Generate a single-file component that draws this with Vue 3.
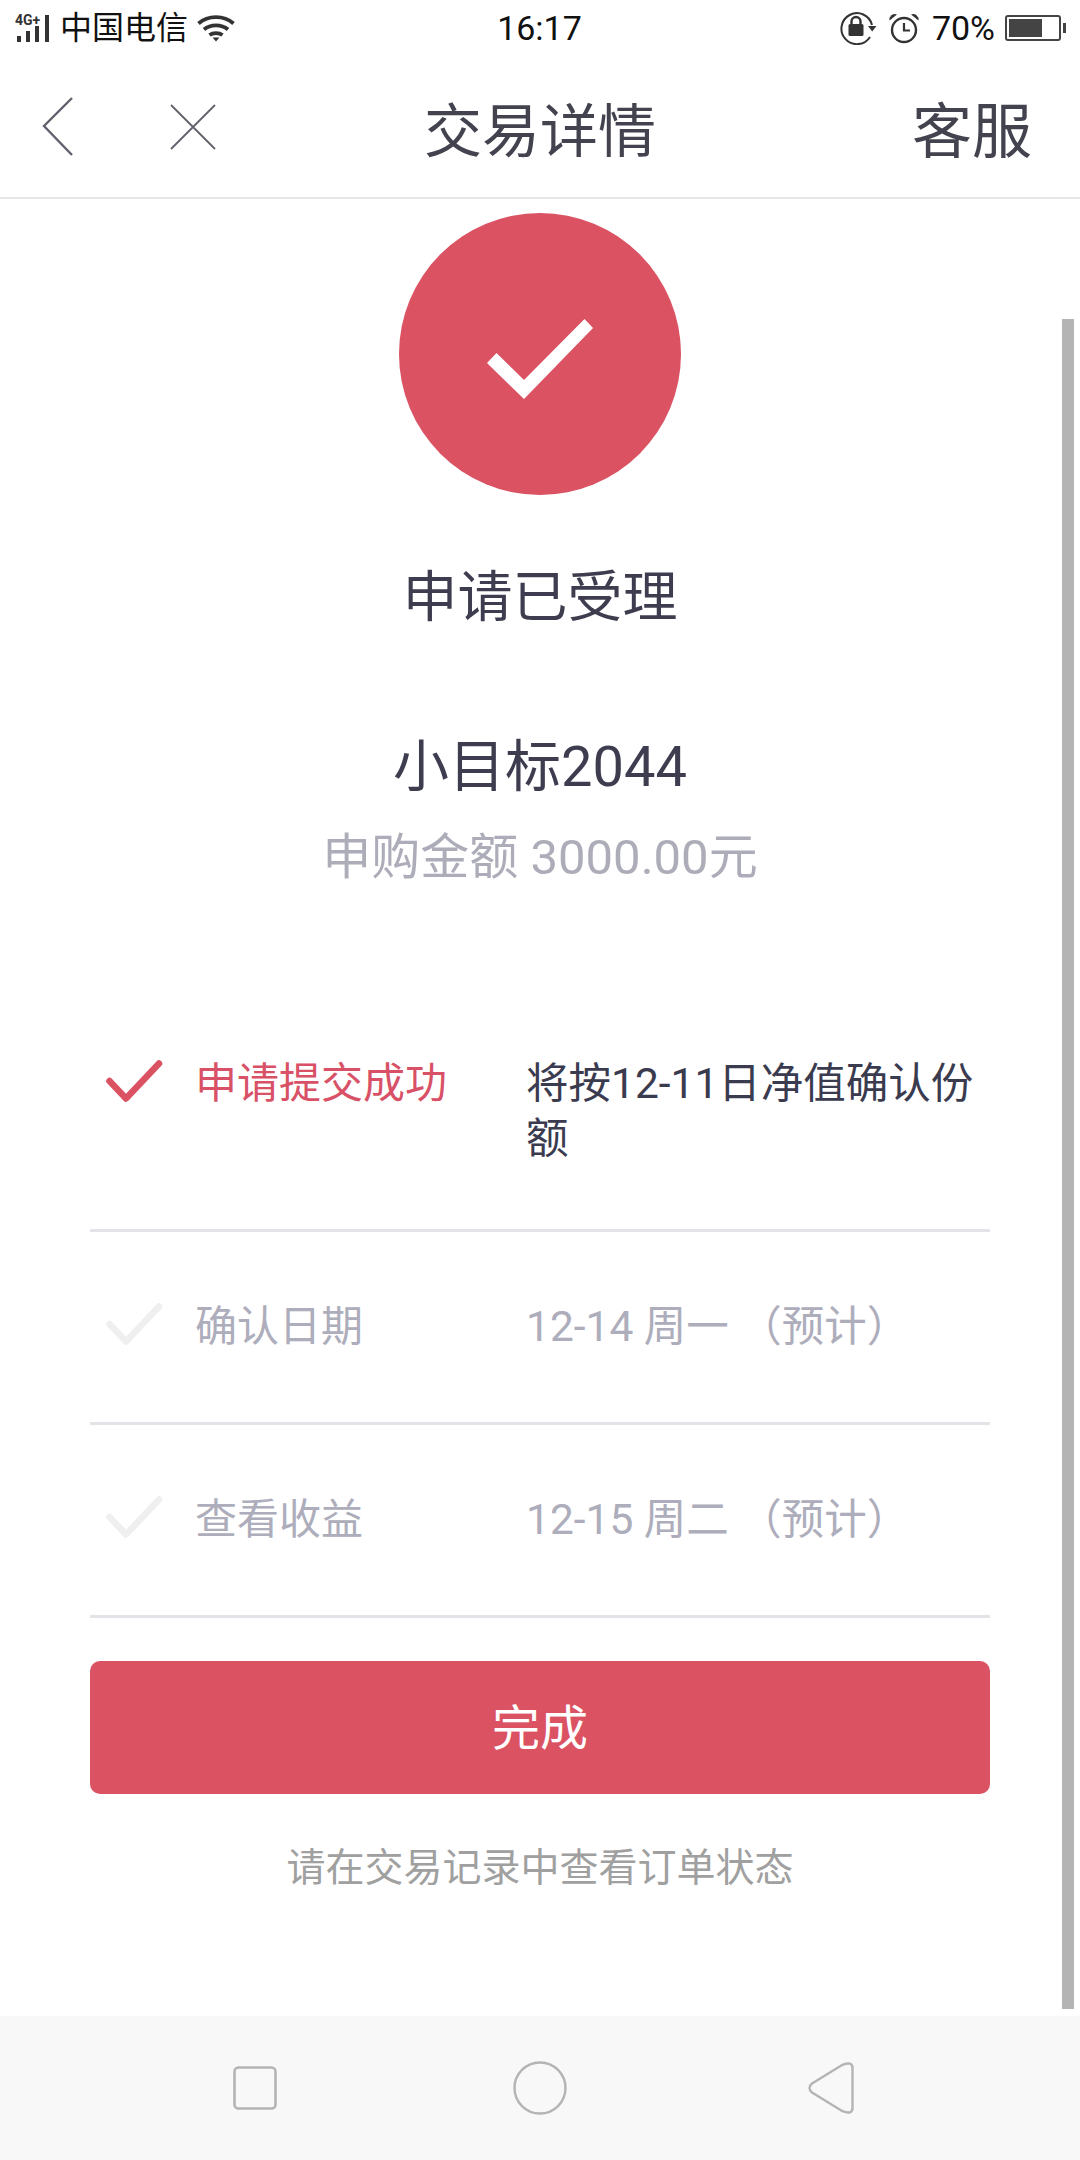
<template>
  <div class="page">
    <div class="status-bar">
      <div class="status-left">
        <svg class="signal" width="40" height="36" viewBox="0 0 40 36">
          <text x="0" y="15" class="signal-type">4G+</text>
          <rect x="2" y="26" width="4" height="6" />
          <rect x="11" y="21" width="4" height="11" />
          <rect x="20" y="16" width="4" height="16" />
          <rect x="30" y="5" width="4" height="27" />
        </svg>
        <span class="carrier">中国电信</span>
        <svg class="wifi" width="38" height="28" viewBox="0 0 38 28" fill="none" stroke="#333" stroke-width="3.8">
          <path d="M1.5 9.5C11 1 27 1 36.5 9.5" />
          <path d="M7 15.5C13.5 10 24.5 10 31 15.5" />
          <path d="M12.5 21C16 18.5 22 18.5 25.5 21" />
          <path d="M15.5 23.5L19 27.5L22.5 23.5Z" fill="#333" stroke="none" />
        </svg>
      </div>
      <span class="clock">16:17</span>
      <div class="status-right">
        <svg width="38" height="34" viewBox="0 0 38 34" fill="none" stroke="#333" stroke-width="2">
          <path d="M33 14A15.5 15.5 0 1 0 31 26" />
          <path d="M29 15H37.5L33.2 20.5Z" fill="#333" stroke="none" />
          <path d="M12.5 13V10.5A4.5 4.5 0 0 1 21.5 10.5V13" stroke-width="2.4" />
          <rect x="9.5" y="13" width="15" height="12" rx="1.5" fill="#333" stroke="none" />
        </svg>
        <svg width="32" height="32" viewBox="0 0 32 32" fill="none" stroke="#333" stroke-width="2.4">
          <circle cx="16" cy="18" r="12" />
          <path d="M16 11V18.5H22" stroke-width="2.2" />
          <path d="M1.5 8.5A5.5 5.5 0 0 1 9 2.5Z" fill="#333" stroke="none" />
          <path d="M30.5 8.5A5.5 5.5 0 0 0 23 2.5Z" fill="#333" stroke="none" />
        </svg>
        <span class="battery-text">70%</span>
        <div class="battery">
          <div class="battery-level" :style="{ width: batteryLevel + '%' }"></div>
        </div>
      </div>
    </div>

    <header class="nav-bar">
      <div class="nav-left">
        <svg width="32" height="60" viewBox="0 0 32 60" fill="none" stroke="#62626c" stroke-width="2.4">
          <path d="M30 1L2 29L30 58" />
        </svg>
        <svg width="46" height="46" viewBox="0 0 46 46" fill="none" stroke="#62626c" stroke-width="1.8">
          <path d="M1 1L45 45M45 1L1 45" />
        </svg>
      </div>
      <h1 class="nav-title">交易详情</h1>
      <div class="nav-right">客服</div>
    </header>

    <main class="content">
      <div class="scrollbar"></div>

      <div class="success-circle">
        <svg width="110" height="84" viewBox="0 0 110 84">
          <path d="M4 47L13.5 37L41 64L101.5 3L110 12L41 83Z" fill="#fff" />
        </svg>
      </div>
      <h2 class="result">申请已受理</h2>
      <p class="product">小目标2044</p>
      <p class="amount">申购金额 3000.00元</p>

      <section class="steps">
        <div v-for="step in steps" :key="step.label" class="step" :class="{ active: step.active }">
          <svg class="step-icon" width="65" height="55" viewBox="0 0 65 55" fill="none" stroke-width="6.5" stroke-linecap="round" stroke-linejoin="round">
            <path d="M9.5 25L26 42.5L59 7.5" />
          </svg>
          <div class="step-label">{{ step.label }}</div>
          <div class="step-value">{{ step.value }}</div>
        </div>
      </section>

      <button class="done-button" type="button">完成</button>
      <p class="hint">请在交易记录中查看订单状态</p>
    </main>

    <footer class="system-nav">
      <svg width="44" height="44" viewBox="0 0 44 44" fill="none" stroke="#b4b4b4" stroke-width="2.6">
        <rect x="1.5" y="1.5" width="41" height="41" rx="4" />
      </svg>
      <svg width="54" height="54" viewBox="0 0 54 54" fill="none" stroke="#b4b4b4" stroke-width="2.4">
        <circle cx="27" cy="27" r="25.5" />
      </svg>
      <svg class="back-key" width="46" height="52" viewBox="0 0 46 52" fill="none" stroke="#b4b4b4" stroke-width="2.4" stroke-linejoin="round">
        <path d="M4 21.5L34.5 2.8Q44.5 -1 44.5 6V46Q44.5 53 34.5 49.2L4 30.5Q-1 26 4 21.5Z" />
      </svg>
    </footer>
  </div>
</template>

<script setup>
const batteryLevel = 68

const steps = [
  { label: '申请提交成功', value: '将按12-11日净值确认份额', active: true },
  { label: '确认日期', value: '12-14 周一 （预计）', active: false },
  { label: '查看收益', value: '12-15 周二 （预计）', active: false }
]
</script>

<style scoped>
.page {
  display: flex;
  flex-direction: column;
  width: 1080px;
  height: 2160px;
  overflow: hidden;
  background: #fff;
  font-family: Roboto, "Noto Sans CJK SC", sans-serif;
  color: #3d3d4f;
}

.status-bar {
  display: grid;
  grid-template-columns: 1fr auto 1fr;
  align-items: center;
  height: 56px;
  padding: 0 19px 0 15px;
  font-size: 32px;
  color: #111;
}

.status-left,
.status-right {
  display: flex;
  align-items: center;
}

.status-right {
  justify-content: flex-end;
}

.status-left {
  gap: 5px;
}

.signal {
  fill: #333;
}

.signal-type {
  font-size: 14px;
  font-weight: 700;
  font-family: Roboto, sans-serif;
}

.carrier {
  line-height: 56px;
}

.wifi {
  margin-left: 4px;
}

.clock {
  margin-left: 3px;
  font-size: 34px;
  line-height: 56px;
}

.status-right svg:first-child {
  margin-right: 11px;
}

.battery-text {
  margin: 0 10px 0 12px;
  font-size: 34px;
  line-height: 56px;
}

.battery {
  position: relative;
  box-sizing: border-box;
  width: 56px;
  height: 26px;
  padding: 2px;
  border: 2px solid #444;
  border-radius: 3px;
}

.battery::after {
  content: "";
  position: absolute;
  top: 6px;
  right: -7px;
  width: 3px;
  height: 10px;
  background: #444;
}

.battery-level {
  height: 100%;
  background: #444;
}

.nav-bar {
  display: grid;
  grid-template-columns: 1fr auto 1fr;
  align-items: center;
  box-sizing: border-box;
  height: 143px;
  padding: 0 48px;
  border-bottom: 2px solid #e6e6e6;
}

.nav-left {
  display: flex;
  align-items: center;
  gap: 96px;
  margin-left: -6px;
}

.nav-title {
  margin: 0;
  font-size: 58px;
  font-weight: 400;
  color: #43434f;
}

.nav-right {
  justify-self: end;
  font-size: 60px;
  color: #43434f;
}

.content {
  position: relative;
  flex: 1;
  padding: 14px 90px 0;
}

.scrollbar {
  position: absolute;
  top: 120px;
  right: 6px;
  bottom: 7px;
  width: 12px;
  background: #b4b4b4;
}

.success-circle {
  display: flex;
  align-items: center;
  justify-content: center;
  width: 282px;
  height: 282px;
  margin: 0 auto;
  border-radius: 50%;
  background: #db5263;
}

.success-circle svg {
  margin-top: 8px;
  margin-right: 4px;
}

.result,
.product,
.amount,
.hint {
  margin: 0;
  text-align: center;
  font-weight: 400;
}

.result {
  margin-top: 62px;
  font-size: 55px;
  line-height: 80px;
}

.product {
  margin-top: 95px;
  font-size: 56px;
  line-height: 70px;
}

.amount {
  margin-top: 26px;
  font-size: 49px;
  line-height: 60px;
  color: #adadb9;
}

.steps {
  margin-top: 101px;
}

.step {
  display: grid;
  grid-template-columns: 105px 331px 1fr;
  padding: 67px 0 68px;
  border-bottom: 3px solid #e4e4e8;
  font-size: 42px;
  line-height: 55px;
  color: #adadbb;
}

.step.active {
  padding-bottom: 63px;
}

.step-icon {
  margin-left: 10px;
  stroke: #efefef;
}

.step-value {
  font-size: 42.5px;
}

.step.active .step-icon {
  stroke: #db5263;
}

.step.active .step-label {
  color: #d85166;
}

.step.active .step-value {
  color: #3b3b4f;
}

.done-button {
  display: block;
  box-sizing: border-box;
  width: 100%;
  height: 133px;
  margin-top: 43px;
  padding: 0 0 8px;
  border: none;
  border-radius: 10px;
  background: #db5263;
  color: #fff;
  font-family: inherit;
  font-size: 48px;
}

.hint {
  margin-top: 49px;
  font-size: 39px;
  line-height: 50px;
  color: #a0a0a0;
}

.system-nav {
  display: flex;
  align-items: center;
  gap: 236px;
  height: 144px;
  padding-left: 233px;
  background: #f8f8f8;
}

.back-key {
  margin-left: 5px;
}
</style>
